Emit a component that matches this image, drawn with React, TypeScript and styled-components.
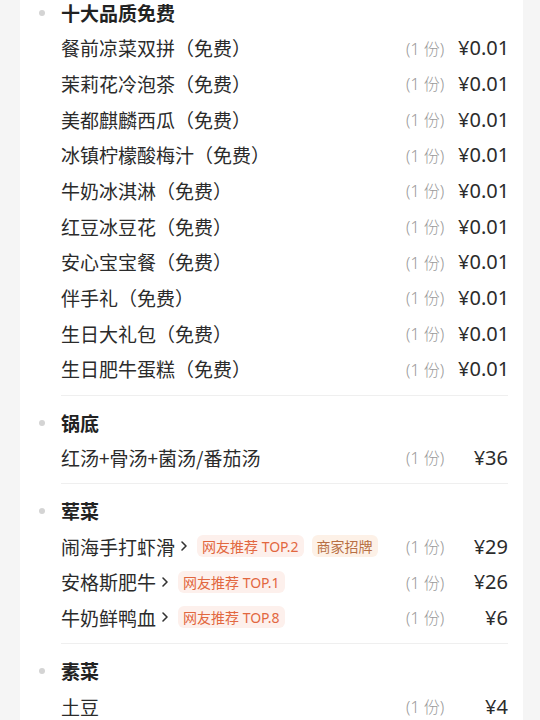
import React from "react";
import styled, { createGlobalStyle } from "styled-components";

const Global = createGlobalStyle`
  html, body { margin: 0; padding: 0; background: #f5f5f5; }
  body { font-family: "Noto Sans", "Noto Sans CJK SC", sans-serif; }
`;

const Page = styled.div`
  background: #f5f5f5;
  overflow: hidden;
  height: 720px;
`;

const Card = styled.div`
  margin-left: 20px;
  width: 503px;
  background: #ffffff;
  min-height: 720px;
  padding-right: 15px;
  box-sizing: border-box;
`;

const Section = styled.section<{ $first?: boolean }>`
  display: grid;
  grid-template-columns: 41px 1fr;
  padding-top: ${(p) => (p.$first ? "0" : "14px")};
`;

const Marker = styled.div`
  height: 26px;
  display: flex;
  align-items: center;
  padding-left: 19px;
  &::after {
    content: "";
    width: 6px;
    height: 6px;
    border-radius: 50%;
    background: #d4d4d4;
  }
`;

const Body = styled.div`
  display: flex;
  flex-direction: column;
`;

const Title = styled.div`
  height: 26px;
  line-height: 26px;
  font-family: "Noto Sans CJK SC", sans-serif;
  font-size: 19px;
  font-weight: 700;
  color: #222;
  margin-bottom: 4px;
`;

const Row = styled.div`
  height: 35.67px;
  display: flex;
  align-items: center;
`;

const Name = styled.div`
  flex: 1;
  display: flex;
  align-items: center;
  min-width: 0;
  white-space: nowrap;
  font-family: "Noto Sans CJK SC", sans-serif;
  font-size: 19px;
  color: #2b2b2b;
`;

const Chevron = styled.svg`
  width: 8px;
  height: 12px;
  margin-left: 5px;
  margin-right: 9px;
  flex: none;
`;

const Tag = styled.span<{ $brand?: boolean }>`
  display: inline-flex;
  align-items: center;
  height: 22px;
  padding: 0 5px;
  border-radius: 6px;
  font-family: "Noto Sans", "Noto Sans CJK SC", sans-serif;
  font-size: 14px;
  margin-right: 8px;
  background: ${(p) => (p.$brand ? "#fdf1e7" : "#fdf0ec")};
  color: ${(p) => (p.$brand ? "#b86f44" : "#e2673f")};
`;

const Qty = styled.div`
  width: 52px;
  flex: none;
  font-family: "Noto Sans", "Noto Sans CJK SC", sans-serif;
  font-size: 16px;
  font-weight: 300;
  color: #9a9a9a;
`;

const Price = styled.div`
  width: 50px;
  flex: none;
  text-align: right;
  font-family: "Noto Sans", sans-serif;
  font-size: 20px;
  font-weight: 400;
  color: #2b2b2b;
`;

const Divider = styled.div`
  height: 1px;
  background: #efefef;
  margin-top: 8px;
`;

type Item = { name: string; price: string; link?: boolean; tags?: { text: string; brand?: boolean }[] };
type Group = { title: string; items: Item[]; divider: boolean };

const free = [
  "餐前凉菜双拼（免费）",
  "茉莉花冷泡茶（免费）",
  "美都麒麟西瓜（免费）",
  "冰镇柠檬酸梅汁（免费）",
  "牛奶冰淇淋（免费）",
  "红豆冰豆花（免费）",
  "安心宝宝餐（免费）",
  "伴手礼（免费）",
  "生日大礼包（免费）",
  "生日肥牛蛋糕（免费）",
];

const groups: Group[] = [
  { title: "十大品质免费", items: free.map((n) => ({ name: n, price: "¥0.01" })), divider: true },
  { title: "锅底", items: [{ name: "红汤+骨汤+菌汤/番茄汤", price: "¥36" }], divider: true },
  {
    title: "荤菜",
    items: [
      { name: "闹海手打虾滑", price: "¥29", link: true, tags: [{ text: "网友推荐 TOP.2" }, { text: "商家招牌", brand: true }] },
      { name: "安格斯肥牛", price: "¥26", link: true, tags: [{ text: "网友推荐 TOP.1" }] },
      { name: "牛奶鲜鸭血", price: "¥6", link: true, tags: [{ text: "网友推荐 TOP.8" }] },
    ],
    divider: true,
  },
  { title: "素菜", items: [{ name: "土豆", price: "¥4" }], divider: false },
];

export default function App() {
  return (
    <Page>
      <Global />
      <Card>
        {groups.map((g, gi) => (
          <Section key={g.title} $first={gi === 0}>
            <Marker />
            <Body>
              <Title>{g.title}</Title>
              {g.items.map((it, i) => (
                <Row key={i}>
                  <Name>
                    {it.name}
                    {it.link && (
                      <Chevron viewBox="0 0 8 12">
                        <path d="M2 2 L6 6 L2 10" fill="none" stroke="#333" strokeWidth="1.6" strokeLinecap="round" strokeLinejoin="round" />
                      </Chevron>
                    )}
                    {it.tags?.map((t) => (
                      <Tag key={t.text} $brand={t.brand}>{t.text}</Tag>
                    ))}
                  </Name>
                  <Qty>(1 份)</Qty>
                  <Price>{it.price}</Price>
                </Row>
              ))}
              {g.divider && <Divider />}
            </Body>
          </Section>
        ))}
      </Card>
    </Page>
  );
}
